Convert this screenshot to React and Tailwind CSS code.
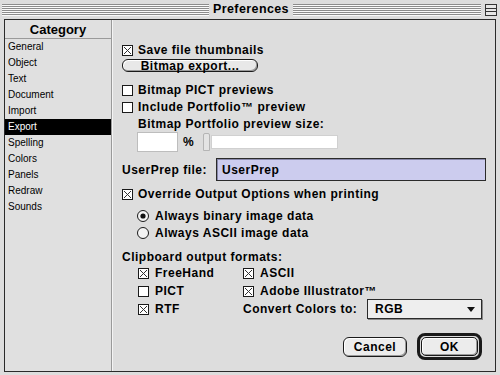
import React from "react";

function Check({ checked }) {
  return (
    <svg width="11" height="11" viewBox="0 0 11 11" className="shrink-0">
      <rect x="0.5" y="0.5" width="10" height="10" fill="#ffffff" stroke="#1a1a1a" />
      {checked && (
        <g stroke="#333" strokeWidth="1">
          <line x1="2" y1="2" x2="9" y2="9" />
          <line x1="9" y1="2" x2="2" y2="9" />
        </g>
      )}
    </svg>
  );
}

function Radio({ on }) {
  return (
    <svg width="12" height="12" viewBox="0 0 12 12" className="shrink-0">
      <circle cx="6" cy="6" r="5.5" fill="#f4f4f4" stroke="#1a1a1a" />
      {on && <circle cx="6" cy="6" r="2.6" fill="#111" />}
    </svg>
  );
}

const cats = ["General", "Object", "Text", "Document", "Import", "Export", "Spelling", "Colors", "Panels", "Redraw", "Sounds"];

const stripe = "h-[12px] bg-[repeating-linear-gradient(to_bottom,#8c8c8c_0px,#8c8c8c_1px,#fafafa_1px,#fafafa_2px)]";

export default function App() {
  return (
    <div className="w-[500px] h-[375px] bg-[#dddddd] flex flex-col font-['Liberation_Sans',Arial,sans-serif] text-black overflow-hidden">
      {/* title bar */}
      <div className="h-[19px] flex items-center pl-[2px] pr-[3px]">
        <div className={"w-[207px] " + stripe} />
        <div className="w-[84px] text-center text-[12.5px] font-bold leading-none tracking-[0.4px]">Preferences</div>
        <div className={"flex-1 " + stripe} />
        <div className="w-[4px]" />
        <svg width="12" height="12" viewBox="0 0 12 12" className="shrink-0">
          <rect x="0.5" y="0.5" width="11" height="11" fill="#e6e6e6" stroke="#333" />
          <line x1="1" y1="4.5" x2="11" y2="4.5" stroke="#333" />
          <line x1="1" y1="7.5" x2="11" y2="7.5" stroke="#333" />
        </svg>
      </div>

      {/* frame */}
      <div className="ml-[4px] mr-[4px] h-[353px] border border-[#2a2a2a] flex">
        {/* category list */}
        <div className="w-[107px] border-r border-[#9a9a9a] bg-[#e0e0e0] flex flex-col">
          <div className="h-[19px] border-b border-[#9a9a9a] flex items-center justify-center text-[13px] font-bold leading-none">
            Category
          </div>
          {cats.map((c) => (
            <div
              key={c}
              className={
                c === "Export"
                  ? "h-[16px] flex items-center pl-[3px] text-[10px] leading-none bg-black text-white"
                  : "h-[16px] flex items-center pl-[3px] text-[10px] leading-none"
              }
            >
              {c}
            </div>
          ))}
        </div>

        {/* right panel */}
        <div className="flex-1 border-l border-[#f4f4f4] pl-[9px] pt-[22px] flex flex-col text-[12px] font-bold leading-none tracking-[0.5px]">
          <div className="h-[16px] flex items-center">
            <Check checked />
            <span className="ml-[5px]">Save file thumbnails</span>
          </div>
          <div className="mt-[1px] w-[136px] h-[13px] rounded-[6px] border border-[#1a1a1a] bg-[#e8e8e8] shadow-[inset_1px_1px_0_#ffffff,inset_-1px_-1px_0_#9a9a9a] flex items-center justify-center">
            Bitmap export...
          </div>
          <div className="mt-[10px] h-[16px] flex items-center">
            <Check />
            <span className="ml-[5px]">Bitmap PICT previews</span>
          </div>
          <div className="mt-[1px] h-[16px] flex items-center">
            <Check />
            <span className="ml-[5px]">Include Portfolio™ preview</span>
          </div>
          <div className="mt-[1px] h-[16px] flex items-center pl-[16px]">Bitmap Portfolio preview size:</div>
          <div className="h-[20px] flex items-center pl-[15px]">
            <div className="w-[41px] h-[20px] bg-white border border-[#bdbdbd]" />
            <span className="ml-[5px]">%</span>
            <div className="ml-[9px] w-[7px] h-[18px] border border-[#b5b5b5] bg-[#e4e4e4] rounded-t-[2px]" />
            <div className="ml-[1px] w-[127px] h-[14px] bg-white border border-[#d0d0d0]" />
          </div>
          <div className="mt-[6px] h-[23px] flex items-center">
            <span className="w-[94px]">UserPrep file:</span>
            <div className="w-[270px] h-[23px] bg-[#ccccee] border border-[#2a2a2a] shadow-[inset_1px_1px_0_#8888aa] flex items-center pl-[5px]">
              UserPrep
            </div>
          </div>
          <div className="mt-[5px] h-[16px] flex items-center">
            <Check checked />
            <span className="ml-[5px]">Override Output Options when printing</span>
          </div>
          <div className="mt-[6px] h-[16px] flex items-center pl-[15px]">
            <Radio on />
            <span className="ml-[6px]">Always binary image data</span>
          </div>
          <div className="mt-[1px] h-[16px] flex items-center pl-[15px]">
            <Radio />
            <span className="ml-[6px]">Always ASCII image data</span>
          </div>
          <div className="mt-[8px] h-[16px] flex items-center">Clipboard output formats:</div>
          <div className="mt-[0px] flex">
            <div className="w-[121px] pl-[16px] flex flex-col">
              <div className="h-[16px] flex items-center">
                <Check checked />
                <span className="ml-[6px]">FreeHand</span>
              </div>
              <div className="mt-[2px] h-[16px] flex items-center">
                <Check />
                <span className="ml-[6px]">PICT</span>
              </div>
              <div className="mt-[2px] h-[16px] flex items-center">
                <Check checked />
                <span className="ml-[6px]">RTF</span>
              </div>
            </div>
            <div className="flex flex-col">
              <div className="h-[16px] flex items-center">
                <Check checked />
                <span className="ml-[6px]">ASCII</span>
              </div>
              <div className="mt-[2px] h-[16px] flex items-center">
                <Check checked />
                <span className="ml-[6px]">Adobe Illustrator™</span>
              </div>
              <div className="mt-[0px] h-[20px] flex items-center">
                <span className="w-[124px]">Convert Colors to:</span>
                <div className="w-[115px] h-[20px] bg-[#eeeeee] border border-[#2a2a2a] shadow-[1px_1px_0_#8a8a8a] flex items-center justify-between pl-[7px] pr-[6px]">
                  <span>RGB</span>
                  <svg width="8" height="5" viewBox="0 0 8 5">
                    <polygon points="0,0 8,0 4,5" fill="#111" />
                  </svg>
                </div>
              </div>
            </div>
          </div>
          <div className="mt-[14px] flex items-center justify-end pr-[13px] gap-[10px]">
            <div className="w-[64px] h-[20px] rounded-[6px] border border-[#1a1a1a] bg-[#ececec] shadow-[inset_1px_1px_0_#ffffff,inset_-1px_-1px_0_#9a9a9a] flex items-center justify-center">
              Cancel
            </div>
            <div className="w-[65px] h-[27px] rounded-[8px] border-[3px] border-[#1a1a1a] bg-[#dddddd] p-[1px] flex">
              <div className="flex-1 rounded-[5px] border border-[#1a1a1a] bg-[#ececec] shadow-[inset_1px_1px_0_#ffffff,inset_-1px_-1px_0_#9a9a9a] flex items-center justify-center">
                OK
              </div>
            </div>
          </div>
        </div>
      </div>
    </div>
  );
}
